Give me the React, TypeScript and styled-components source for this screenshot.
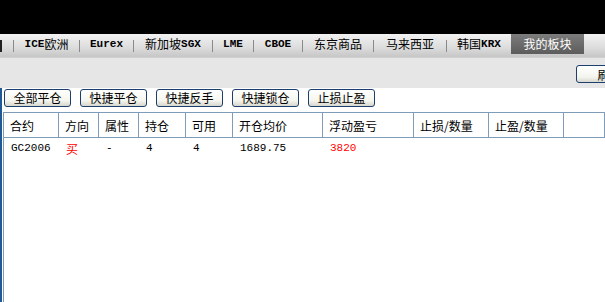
import { Fragment } from "react";
import styled, { createGlobalStyle } from "styled-components";

const GlobalStyle = createGlobalStyle`
  html, body {
    margin: 0;
    padding: 0;
    background: #ffffff;
  }
  #root {
    width: 605px;
    height: 302px;
    overflow: hidden;
  }
`;

const CJK = `"Noto Sans CJK SC", "Liberation Sans", sans-serif`;
const MONO = `"Liberation Mono", "Noto Sans CJK SC", monospace`;

const Page = styled.div`
  width: 605px;
  height: 302px;
  display: flex;
  flex-direction: column;
  overflow: hidden;
  font-family: ${CJK};
  font-size: 12px;
  color: #000;
`;

const TopBlack = styled.div`
  height: 34px;
  flex: none;
  background: #000;
`;

const TabBar = styled.div`
  height: 23px;
  flex: none;
  display: flex;
  align-items: flex-start;
  background: linear-gradient(#f2f2f2, #dcdcdc 60%, #c6c6c6);
`;

const Sep = styled.span`
  flex: none;
  width: 1px;
  height: 12px;
  margin-top: 6px;
  background: #8a8a8a;
`;

const CutOff = styled.span`
  flex: none;
  width: 2px;
  height: 12px;
  margin-top: 6px;
  margin-right: 11px;
  background: #222;
`;

const Tab = styled.div<{ $w: number; $active?: boolean }>`
  flex: none;
  width: ${(p) => p.$w}px;
  height: 20px;
  display: flex;
  align-items: center;
  justify-content: center;
  white-space: nowrap;
  font-size: 12px;
  line-height: 12px;
  color: ${(p) => (p.$active ? "#fff" : "#000")};
  background: ${(p) =>
    p.$active ? "linear-gradient(#7c7c7c, #5c5c5c)" : "transparent"};
`;

// latin letters in the tabs are the narrow half-width kind
const Latin = styled.span`
  font-family: ${MONO};
  font-size: 11px;
  font-weight: 600;
`;

const ToolStrip = styled.div`
  height: 31px;
  flex: none;
  display: flex;
  justify-content: flex-end;
  align-items: flex-start;
  background: #e6e6e6;
  border-top: 1px solid #d0d0d0;
  box-sizing: border-box;
`;

const RefreshButton = styled.button`
  margin-top: 7px;
  margin-right: -38px;
  width: 67px;
  height: 18px;
  padding: 0;
  border: 1px solid #1c3f6e;
  border-radius: 3px;
  background: linear-gradient(#ffffff, #f4f4ee 70%, #d8d8d0);
  font-family: ${CJK};
  font-size: 12px;
  color: #000;
`;

const Panel = styled.div`
  flex: 1;
  display: flex;
  flex-direction: column;
  background: #fff;
  border-left: 2px solid #1f5a96;
`;

const ButtonRow = styled.div`
  display: flex;
  gap: 9px;
  padding: 1px 0 0 2px;
  height: 24px;
  box-sizing: border-box;
`;

const ActionButton = styled.button`
  flex: none;
  width: 67px;
  height: 18px;
  padding: 0;
  border: 1px solid #1c3f6e;
  border-radius: 3px;
  background: linear-gradient(#ffffff, #f6f6f0 65%, #d6d6ce);
  font-family: ${CJK};
  font-size: 12px;
  line-height: 16px;
  color: #000;
`;

const Table = styled.div`
  margin-left: 1px;
  flex: 1;
  border-left: 1px solid #7f9db9;
`;

const COLS = "55px 40px 40px 47px 47px 90px 91px 75px 75px 1fr";

const HeaderRow = styled.div`
  display: grid;
  grid-template-columns: ${COLS};
  height: 26px;
  box-sizing: border-box;
  border-top: 1px solid #7f9db9;
  border-bottom: 1px solid #7f9db9;
`;

const HeadCell = styled.div`
  display: flex;
  align-items: center;
  padding-left: 6px;
  border-right: 1px solid #7f9db9;
  font-size: 12px;
  white-space: nowrap;
`;

const DataRow = styled.div`
  display: grid;
  grid-template-columns: ${COLS};
  height: 20px;
`;

const DataCell = styled.div<{ $red?: boolean; $cjk?: boolean }>`
  display: flex;
  align-items: center;
  padding-left: 7px;
  font-family: ${(p) => (p.$cjk ? CJK : MONO)};
  font-size: ${(p) => (p.$cjk ? "12px" : "11px")};
  color: ${(p) => (p.$red ? "#ff0000" : "#000")};
  white-space: nowrap;
`;

const tabs: { w: number; label: React.ReactNode }[] = [
  { w: 65, label: <><Latin>ICE</Latin>欧洲</> },
  { w: 53, label: <Latin>Eurex</Latin> },
  { w: 78, label: <>新加坡<Latin>SGX</Latin></> },
  { w: 40, label: <Latin>LME</Latin> },
  { w: 48, label: <Latin>CBOE</Latin> },
  { w: 70, label: "东京商品" },
  { w: 72, label: "马来西亚" },
  { w: 64, label: <>韩国<Latin>KRX</Latin></> },
];

const actions = ["全部平仓", "快捷平仓", "快捷反手", "快捷锁仓", "止损止盈"];

const headers = [
  "合约",
  "方向",
  "属性",
  "持仓",
  "可用",
  "开仓均价",
  "浮动盈亏",
  "止损/数量",
  "止盈/数量",
  "",
];

export default function App() {
  return (
    <>
      <GlobalStyle />
      <Page>
        <TopBlack />
        <TabBar>
          <CutOff />
          {tabs.map((t, i) => (
            <Fragment key={i}>
              <Sep />
              <Tab $w={t.w}>{t.label}</Tab>
            </Fragment>
          ))}
          <Tab $w={73} $active>
            我的板块
          </Tab>
        </TabBar>
        <ToolStrip>
          <RefreshButton>刷新</RefreshButton>
        </ToolStrip>
        <Panel>
          <ButtonRow>
            {actions.map((a) => (
              <ActionButton key={a}>{a}</ActionButton>
            ))}
          </ButtonRow>
          <Table>
            <HeaderRow>
              {headers.map((h, i) => (
                <HeadCell key={i}>{h}</HeadCell>
              ))}
            </HeaderRow>
            <DataRow>
              <DataCell>GC2006</DataCell>
              <DataCell $cjk $red>
                买
              </DataCell>
              <DataCell>-</DataCell>
              <DataCell>4</DataCell>
              <DataCell>4</DataCell>
              <DataCell>1689.75</DataCell>
              <DataCell $red>3820</DataCell>
              <DataCell />
              <DataCell />
              <DataCell />
            </DataRow>
          </Table>
        </Panel>
      </Page>
    </>
  );
}
